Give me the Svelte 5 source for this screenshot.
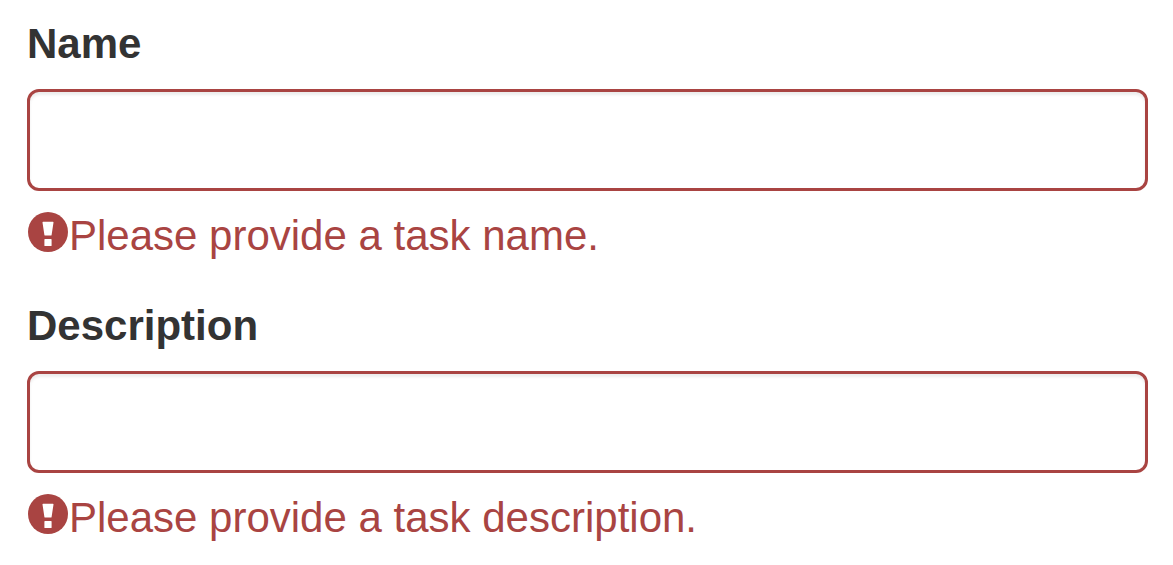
<script>
  const fields = [
    { id: 'name', label: 'Name', error: 'Please provide a task name.' },
    { id: 'description', label: 'Description', error: 'Please provide a task description.' }
  ];
</script>

<form>
  {#each fields as field}
    <div class="group">
      <label for={field.id}>{field.label}</label>
      <input id={field.id} type="text" />
      <div class="help">
        <svg class="icon" viewBox="0 0 40 40" aria-hidden="true">
          <circle cx="20" cy="20" r="20" fill="#a94442" />
          <path d="M15.1 9.7h9.8q.7 0 .6.7l-1.9 12.5q-.1.7-.8.7h-5.6q-.7 0-.8-.7l-1.9-12.5q-.1-.7.6-.7zM17 27h6q.6 0 .6.6v5.8q0 .6-.6.6h-6q-.6 0-.6-.6v-5.8q0-.6.6-.6z" fill="#fff" />
        </svg>
        <span>{field.error}</span>
      </div>
    </div>
  {/each}
</form>

<style>
  :global(body) { background: #fff; }
  form {
    padding: 14px 25px 0 27px;
    font-family: "Liberation Sans", Arial, sans-serif;
    font-size: 42px;
    line-height: 60px;
  }
  .group { height: 282px; }
  label {
    display: block;
    height: 60px;
    margin-bottom: 15px;
    font-weight: 700;
    color: #333;
  }
  input {
    display: block;
    box-sizing: border-box;
    width: 100%;
    height: 102px;
    padding: 18px 36px;
    border: 3px solid #a94442;
    border-radius: 12px;
    background: #fff;
    font: inherit;
    outline: none;
    box-shadow: inset 0 3px 3px rgba(0, 0, 0, 0.075);
  }
  .help {
    display: flex;
    height: 60px;
    margin-top: 15px;
    color: #a94442;
    white-space: nowrap;
  }
  .icon {
    width: 40px;
    height: 40px;
    margin: 6px 1px 0;
    flex: none;
  }
</style>
